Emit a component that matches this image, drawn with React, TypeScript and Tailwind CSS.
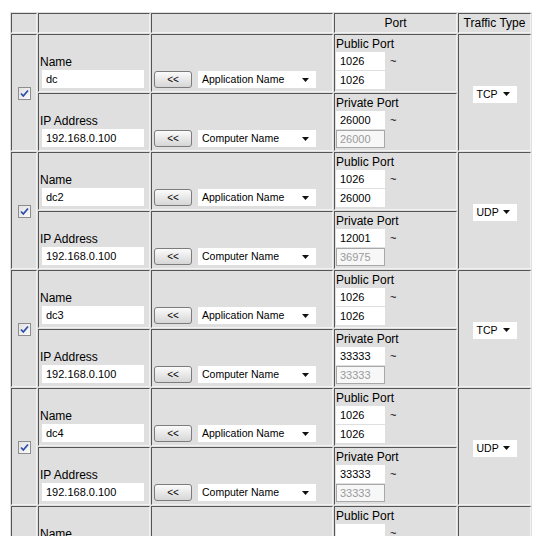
import React from "react";

type Rule = {
  name: string;
  pub: [string, string];
  priv: [string, string];
  proto: string;
};

const rules: Rule[] = [
  { name: "dc", pub: ["1026", "1026"], priv: ["26000", "26000"], proto: "TCP" },
  { name: "dc2", pub: ["1026", "26000"], priv: ["12001", "36975"], proto: "UDP" },
  { name: "dc3", pub: ["1026", "1026"], priv: ["33333", "33333"], proto: "TCP" },
  { name: "dc4", pub: ["1026", "1026"], priv: ["33333", "33333"], proto: "UDP" },
  { name: "", pub: ["", ""], priv: ["", ""], proto: "TCP" },
];

const cell =
  "border border-[#555555] border-r-[#f2f2f2] border-b-[#f2f2f2] p-0";

function Arrow() {
  return (
    <svg width="7" height="4" viewBox="0 0 7 4" className="shrink-0">
      <path d="M0 0h7L3.5 4z" fill="#111" />
    </svg>
  );
}

function Dropdown({ label, className }: { label: string; className: string }) {
  return (
    <div
      className={`inline-flex items-center justify-between bg-white h-[17px] pl-[4px] pr-[7px] text-[10.5px] text-black ${className}`}
    >
      <span>{label}</span>
      <Arrow />
    </div>
  );
}

function Field({ value, className }: { value: string; className: string }) {
  return (
    <div
      className={`bg-white h-[18px] flex items-center pl-[4px] text-[11px] text-black ${className}`}
    >
      {value}
    </div>
  );
}

function Disabled({ value }: { value: string }) {
  return (
    <div className="bg-[#f7f7f7] border border-[#a8a8a8] w-[49px] h-[18px] flex items-center pl-[3px] text-[11px] text-[#9a9a9a]">
      {value}
    </div>
  );
}

function Pick() {
  return (
    <button className="w-[38px] h-[17px] rounded-[3px] border border-[#7c7c7c] bg-gradient-to-b from-[#fbfbfb] to-[#d6d6d6] text-[10px] leading-none text-black">
      &lt;&lt;
    </button>
  );
}

function Check() {
  return (
    <span className="inline-flex w-[13px] h-[13px] items-center justify-center border border-[#8d8d8d] bg-gradient-to-br from-[#e2e2e2] to-[#fafafa]">
      <svg width="9" height="9" viewBox="0 0 9 9">
        <path d="M1 4.5l2.3 2.5L8 1.5" stroke="#2c4fa8" strokeWidth="1.8" fill="none" />
      </svg>
    </span>
  );
}

function PortPair({ title, a, b }: { title: string; a: string; b: string }) {
  return (
    <div className="flex flex-col px-[1px] pt-[2px] h-full">
      <div className="text-[12px] leading-[15px] text-black">{title}</div>
      <div className="flex items-center gap-[5px]">
        <Field value={a} className="w-[49px]" />
        <span className="text-[11px] text-black">~</span>
      </div>
      <div className="mt-[1px]">
        {title === "Public Port" ? (
          <Field value={b} className="w-[49px]" />
        ) : (
          <Disabled value={b} />
        )}
      </div>
    </div>
  );
}

export default function App() {
  return (
    <div className="w-[549px] h-[536px] overflow-hidden bg-white pt-[12px] pl-[10px] font-['Liberation_Sans',Arial,sans-serif]">
      <table className="table-fixed border-separate border-spacing-[1px] bg-[#dfdfdf]">
        <colgroup>
          <col className="w-[26px]" />
          <col className="w-[112px]" />
          <col className="w-[182px]" />
          <col className="w-[123px]" />
          <col className="w-[73px]" />
        </colgroup>
        <tbody>
          <tr className="h-[19px]">
            <td className={cell} />
            <td className={cell} />
            <td className={cell} />
            <td className={`${cell} text-center text-[12px] text-black`}>Port</td>
            <td className={`${cell} text-center text-[12px] text-black`}>Traffic Type</td>
          </tr>
          {rules.map((r, i) => (
            <React.Fragment key={i}>
              <tr className="h-[58px]">
                <td rowSpan={2} className={`${cell} text-center align-middle`}>
                  {r.name && <Check />}
                </td>
                <td className={`${cell} align-bottom px-[1px] pb-[3px]`}>
                  <div className="text-[12px] leading-[15px] text-black">Name</div>
                  <Field value={r.name} className="w-[102px] ml-[2px]" />
                </td>
                <td className={`${cell} align-bottom pl-[2px] pb-[3px]`}>
                  <div className="flex items-center gap-[6px]">
                    <Pick />
                    <Dropdown label="Application Name" className="w-[118px]" />
                  </div>
                </td>
                <td className={`${cell} align-top`}>
                  <PortPair title="Public Port" a={r.pub[0]} b={r.pub[1]} />
                </td>
                <td rowSpan={2} className={`${cell} text-center align-middle`}>
                  {r.name && <Dropdown label={r.proto} className="w-[44px]" />}
                </td>
              </tr>
              <tr className="h-[58px]">
                <td className={`${cell} align-bottom px-[1px] pb-[3px]`}>
                  <div className="text-[12px] leading-[15px] text-black">IP Address</div>
                  <Field value="192.168.0.100" className="w-[102px] ml-[2px]" />
                </td>
                <td className={`${cell} align-bottom pl-[2px] pb-[3px]`}>
                  <div className="flex items-center gap-[6px]">
                    <Pick />
                    <Dropdown label="Computer Name" className="w-[118px]" />
                  </div>
                </td>
                <td className={`${cell} align-top`}>
                  <PortPair title="Private Port" a={r.priv[0]} b={r.priv[1]} />
                </td>
              </tr>
            </React.Fragment>
          ))}
        </tbody>
      </table>
    </div>
  );
}
